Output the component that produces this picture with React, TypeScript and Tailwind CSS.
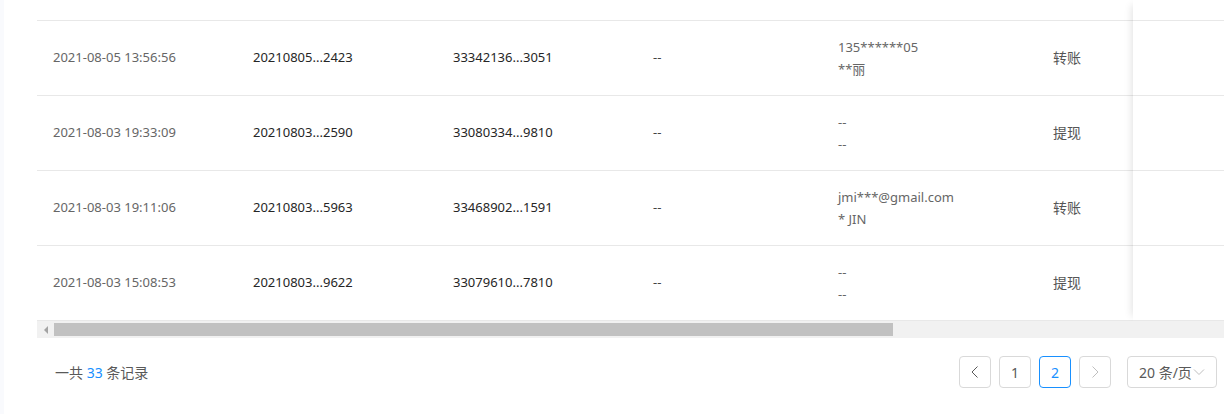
import React from "react";

type Row = {
  date: string;
  order: string;
  trade: string;
  remark: string;
  acc1: string;
  acc2: string;
  type: string;
};

const rows: Row[] = [
  { date: "2021-08-05 13:56:56", order: "20210805...2423", trade: "33342136...3051", remark: "--", acc1: "135******05", acc2: "**丽", type: "转账" },
  { date: "2021-08-03 19:33:09", order: "20210803...2590", trade: "33080334...9810", remark: "--", acc1: "--", acc2: "--", type: "提现" },
  { date: "2021-08-03 19:11:06", order: "20210803...5963", trade: "33468902...1591", remark: "--", acc1: "jmi***@gmail.com", acc2: "* JIN", type: "转账" },
  { date: "2021-08-03 15:08:53", order: "20210803...9622", trade: "33079610...7810", remark: "--", acc1: "--", acc2: "--", type: "提现" },
];

const font = { fontFamily: '"Noto Sans", "Noto Sans CJK SC", sans-serif' };

export default function App() {
  return (
    <div className="flex h-[414px] w-[1224px] overflow-hidden bg-white" style={font}>
      <div className="w-[4px] shrink-0 bg-[#f9fafd]" />
      <div className="flex min-w-0 flex-1 flex-col pl-[33px]">
        {/* table body */}
        <div className="relative h-[321px] overflow-hidden">
          <div className="h-[21px] border-b border-[#e8e8e8]" />
          {rows.map((r, i) => (
            <div key={i} className="flex h-[75px] items-center border-b border-[#e8e8e8] text-[13px]">
              <div className="w-[200px] shrink-0 pl-4 text-[#666]">{r.date}</div>
              <div className="w-[200px] shrink-0 pl-4 text-[#262626]">{r.order}</div>
              <div className="w-[200px] shrink-0 pl-4 text-[#262626]">{r.trade}</div>
              <div className="w-[185px] shrink-0 pl-4 text-[#444]">{r.remark}</div>
              <div className="flex w-[215px] shrink-0 flex-col pl-4 leading-[22px] text-[#666]">
                <span>{r.acc1}</span>
                <span>{r.acc2}</span>
              </div>
              <div className="w-[200px] shrink-0 pb-[2px] pl-4 text-[14px] text-[#555]">{r.type}</div>
            </div>
          ))}
          {/* fixed right column */}
          <div className="absolute right-0 top-0 h-[321px] w-[91px] bg-white shadow-[-6px_0_8px_-5px_rgba(0,0,0,0.12)]">
            <div className="h-[21px] border-b border-[#e8e8e8]" />
            {rows.map((_, i) => (
              <div key={i} className="h-[75px] border-b border-[#e8e8e8]" />
            ))}
          </div>
        </div>
        {/* scrollbar */}
        <div className="flex h-[17px] items-center bg-[#f1f1f1]">
          <div className="flex h-[17px] w-[17px] shrink-0 items-center justify-center">
            <div className="h-0 w-0 border-y-[4px] border-r-[4px] border-y-transparent border-r-[#a3a3a3]" />
          </div>
          <div className="h-[13px] w-[839px] bg-[#c1c1c1]" />
        </div>
        {/* footer */}
        <div className="flex flex-1 items-center justify-between pb-[8px] pl-[18px] pr-[7px]">
          <div className="text-[14px] text-[#595959]">
            一共 <span className="text-[#1890ff]">33</span> 条记录
          </div>
          <div className="flex items-center text-[14px] text-[#595959]">
            <div className="flex h-[32px] w-[32px] items-center justify-center rounded-[4px] border border-[#d9d9d9]">
              <svg width="12" height="14" viewBox="0 0 12 14" fill="none">
                <path d="M8.5 1.5L3 7l5.5 5.5" stroke="#595959" strokeWidth="1" />
              </svg>
            </div>
            <div className="ml-[8px] flex h-[32px] w-[32px] items-center justify-center rounded-[4px] border border-[#d9d9d9]">1</div>
            <div className="ml-[8px] flex h-[32px] w-[32px] items-center justify-center rounded-[4px] border border-[#1890ff] text-[#1890ff]">2</div>
            <div className="ml-[8px] flex h-[32px] w-[32px] items-center justify-center rounded-[4px] border border-[#d9d9d9]">
              <svg width="12" height="14" viewBox="0 0 12 14" fill="none">
                <path d="M3.5 1.5L9 7l-5.5 5.5" stroke="#bfbfbf" strokeWidth="1" />
              </svg>
            </div>
            <div className="ml-[16px] flex h-[32px] w-[90px] items-center rounded-[4px] border border-[#d9d9d9] pl-[11px]">
              <span>20 条/页</span>
              <svg className="ml-[1px]" width="12" height="12" viewBox="0 0 12 12" fill="none">
                <path d="M1 3.5l5 5 5-5" stroke="#bfbfbf" strokeWidth="1" />
              </svg>
            </div>
          </div>
        </div>
      </div>
    </div>
  );
}
